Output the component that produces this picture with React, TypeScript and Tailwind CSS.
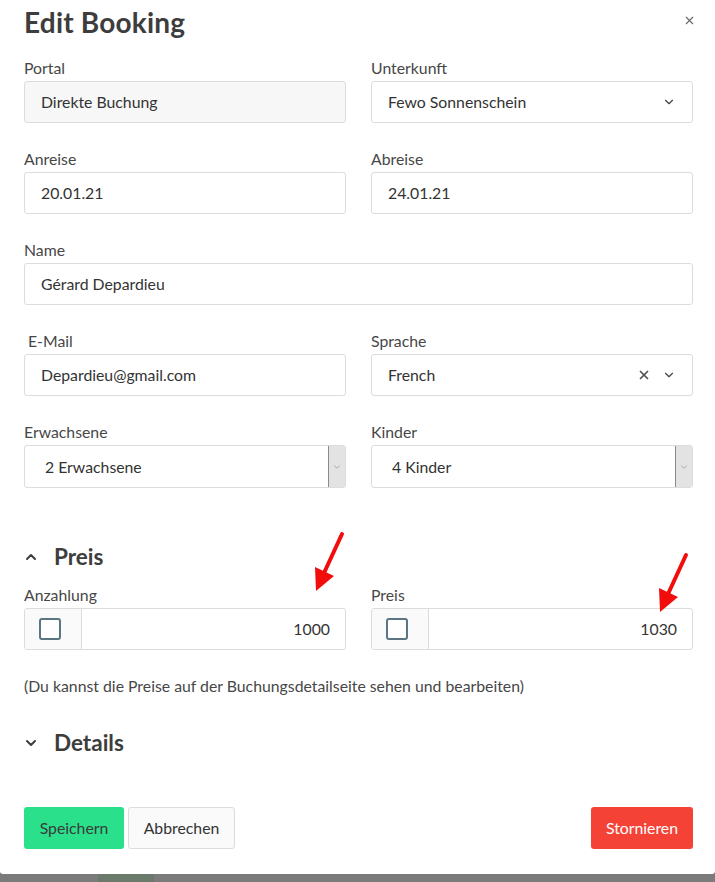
import { ChevronDown, ChevronUp, X } from 'lucide-react';

const font = { fontFamily: 'Lato, "Liberation Sans", sans-serif' };

function Label({ children, className = '' }: { children: React.ReactNode; className?: string }) {
  return <div className={`h-5 leading-5 text-[15.8px] text-[#474747] mb-[3px] ${className}`}>{children}</div>;
}

function Box({ children, className = '' }: { children: React.ReactNode; className?: string }) {
  return (
    <div className={`h-[42px] rounded-[3px] border border-[#dcdcdc] flex items-center text-[15.8px] text-[#333] ${className}`}>
      {children}
    </div>
  );
}

function NativeSelect({ value }: { value: string }) {
  return (
    <Box className="h-[43px] bg-white overflow-hidden">
      <span className="flex-1 pl-5">{value}</span>
      <div className="h-full w-[17px] bg-[#e3e3e3] border-l border-[#8a8a8a] flex items-center justify-center">
        <ChevronDown size={10} strokeWidth={1.5} className="text-[#888]" />
      </div>
    </Box>
  );
}

function PriceInput({ value }: { value: string }) {
  return (
    <Box className="bg-white overflow-hidden">
      <div className="h-full w-[57px] bg-[#fafafa] border-r border-[#dcdcdc] flex items-center pl-[14px]">
        <div className="w-[22px] h-[22px] rounded-[3px] border-2 border-[#5b7584] bg-white" />
      </div>
      <span className="flex-1 text-right pr-[15px]">{value}</span>
    </Box>
  );
}

function Arrow({ className }: { className: string }) {
  return (
    <svg className={`absolute ${className}`} width="34" height="62" viewBox="0 0 34 62">
      <line x1="30" y1="3" x2="12" y2="42" stroke="#f20d0d" strokeWidth="4" strokeLinecap="round" />
      <polygon points="4,60 3,36 22,45" fill="#f20d0d" />
    </svg>
  );
}

export default function App() {
  return (
    <div className="w-[715px] h-[882px] bg-[#7b7b7b] relative overflow-hidden" style={font}>
      <div className="absolute left-[98px] top-[870px] w-[56px] h-[12px] bg-[#6b7a6b]" />
      <div className="relative h-[874px] bg-white rounded-b-[3px] pl-6 pr-[22px]">
        <div className="h-[44px] flex items-center justify-between">
          <h1 className="text-[28px] font-bold text-[#3d3d3d] tracking-[0.2px]">Edit Booking</h1>
          <X size={13} strokeWidth={2} className="text-[#666] -mr-[3px] -mt-[3px]" />
        </div>

        <div className="mt-[14px] grid grid-cols-2 gap-x-[25px] gap-y-[26px]">
          <div>
            <Label>Portal</Label>
            <Box className="bg-[#f7f7f7] pl-4">Direkte Buchung</Box>
          </div>
          <div>
            <Label>Unterkunft</Label>
            <Box className="bg-white pl-4 pr-4 justify-between">
              <span>Fewo Sonnenschein</span>
              <ChevronDown size={14} strokeWidth={2} className="text-[#444]" />
            </Box>
          </div>
          <div>
            <Label>Anreise</Label>
            <Box className="bg-white pl-4">20.01.21</Box>
          </div>
          <div>
            <Label>Abreise</Label>
            <Box className="bg-white pl-4">24.01.21</Box>
          </div>
          <div className="col-span-2">
            <Label>Name</Label>
            <Box className="bg-white pl-4">Gérard Depardieu</Box>
          </div>
          <div>
            <Label className="pl-1">E-Mail</Label>
            <Box className="bg-white pl-4">Depardieu@gmail.com</Box>
          </div>
          <div>
            <Label>Sprache</Label>
            <Box className="bg-white pl-4 pr-4">
              <span className="flex-1">French</span>
              <X size={14} strokeWidth={3} className="text-[#555] mr-[11px]" />
              <ChevronDown size={14} strokeWidth={2} className="text-[#444]" />
            </Box>
          </div>
          <div>
            <Label>Erwachsene</Label>
            <NativeSelect value="2 Erwachsene" />
          </div>
          <div>
            <Label>Kinder</Label>
            <NativeSelect value="4 Kinder" />
          </div>
        </div>

        <div className="relative mt-[55px]">
          <div className="h-7 flex items-center">
            <ChevronUp size={16} strokeWidth={3} className="text-[#3d3d3d] -ml-[1px]" />
            <span className="ml-[15px] text-[22.5px] font-bold text-[#3d3d3d]">Preis</span>
          </div>
          <div className="mt-[14px] grid grid-cols-2 gap-x-[25px]">
            <div>
              <Label>Anzahlung</Label>
              <PriceInput value="1000" />
            </div>
            <div>
              <Label>Preis</Label>
              <PriceInput value="1030" />
            </div>
          </div>
          <Arrow className="left-[288px] -top-[12px]" />
          <Arrow className="left-[632px] top-[9px]" />
        </div>

        <p className="mt-[26px] h-5 leading-5 text-[15.8px] text-[#474747]">
          (Du kannst die Preise auf der Buchungsdetailseite sehen und bearbeiten)
        </p>

        <div className="mt-[33px] h-7 flex items-center">
          <ChevronDown size={16} strokeWidth={3} className="text-[#3d3d3d] -ml-[1px]" />
          <span className="ml-[15px] text-[22.5px] font-bold text-[#3d3d3d]">Details</span>
        </div>

        <div className="mt-[50px] flex items-center">
          <button className="h-[42px] w-[100px] rounded-[3px] bg-[#2be08b] text-[15.8px] text-[#3a3a3a]">
            Speichern
          </button>
          <button className="ml-[4px] h-[42px] w-[107px] rounded-[3px] bg-[#fafafa] border border-[#dcdcdc] text-[15.8px] text-[#333]">
            Abbrechen
          </button>
          <button className="ml-auto h-[42px] w-[102px] rounded-[3px] bg-[#f44336] text-[15.8px] text-white">
            Stornieren
          </button>
        </div>
      </div>
    </div>
  );
}
